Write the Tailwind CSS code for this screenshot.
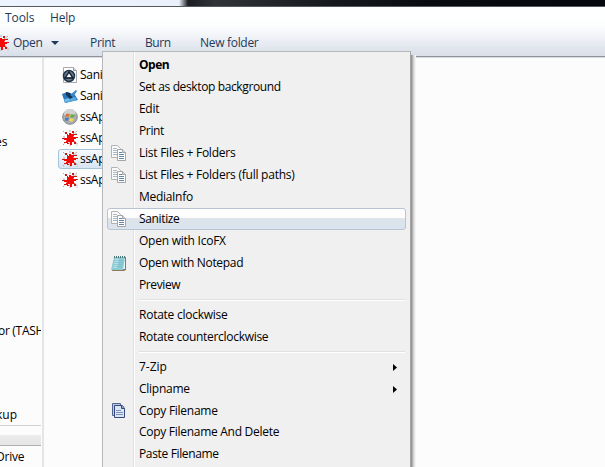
<!DOCTYPE html>
<html lang="en">
<head>
<meta charset="utf-8">
<title>Explorer</title>
<script src="https://cdn.jsdelivr.net/npm/@tailwindcss/browser@4"></script>
</head>
<body class="w-[605px] h-[467px] overflow-hidden bg-[#fcfcfc] font-['Open_Sans','Noto_Sans',sans-serif] text-[12px] leading-[22px] text-black whitespace-nowrap">
<svg class="hidden">
  <symbol id="splat" viewBox="0 0 16 16">
    <path fill="none" stroke="#aaa" stroke-dasharray="2 1" d="M1 1l3 3M8 2V0M11 4l4-3M14 3v2M1 7h3M1 15l4-4M8 12v4M12 11l3 2v3"/>
    <path fill="#f50808" d="M5 5h2V3h2v1h3v2l-1 1h3v2h-2v2l1 1h-3v3H8v-3H6v1H4v-2l1-1H2V8h3z"/>
    <path fill="#c81818" d="M3 2h2v2H3zM5 4h1v1H5zM10 1h2v2h-2zM12 4h3v1h-3zM0 8h2v1H0zM14 7h2v1h-2zM12 12h2v2h-2zM5 13h2v1H5zM2 12h2v1H2z"/>
  </symbol>
  <symbol id="pages" viewBox="0 0 16 16">
    <path fill="#fafafa" stroke="#b3b3b3" d="M.5.500h6l3 3v9h-9z"/>
    <path stroke="#a9bac9" d="M2 3.500h4M2 5.500h5M2 7.500h5M2 9.500h5"/>
    <path fill="#fff" stroke="#a5a5a5" d="M6.500 4.500h5l3 3v8h-8z"/>
    <path fill="#ddd" stroke="#a5a5a5" d="M11.500 4.500v3h3"/>
    <path stroke="#6688a8" d="M8 7.500h3M8 9.500h5M8 11.500h5M8 13.500h5"/>
  </symbol>
</svg>

<header class="h-[57px]">
  <div class="h-[7px] border-b border-[#555a60] bg-[linear-gradient(90deg,#eef4fd_0,#eaf1fb_179px,#1b1d20_188px,#303338_215px,#23262a_270px,#16191d_330px,#080b10_430px,#05080c_100%)]"></div>
  <div class="h-[50px] bg-[linear-gradient(#ffffff_0,#fcfefe_18px,#f8f9fc_24px,#e5e9f0_38px,#d9e0ea_48px)] border-b border-[#8e939c] text-[#1e395b]">
    <nav class="flex h-[22px] pl-[5px]">
      <span class="w-[45px] tracking-[-0.1px]">Tools</span><span class="tracking-[-0.2px]">Help</span>
    </nav>
    <div class="flex h-[27px] items-center pt-px">
      <svg class="w-4 h-4 -ml-[7px]"><use href="#splat"/></svg>
      <span class="ml-1 w-[38px] tracking-[-0.3px]">Open</span>
      <svg class="w-2 h-1" viewBox="0 0 8 4"><path fill="#1e395b" d="M0 0h8L4 4z"/></svg>
      <span class="ml-[31px] w-[55px] tracking-[-0.3px]">Print</span>
      <span class="w-[55px] tracking-[-0.4px]">Burn</span>
      <span class="tracking-[-0.3px]">New folder</span>
    </div>
  </div>
</header>

<div class="flex h-[410px] border-t border-[#d8dade]">
  <aside class="w-[44px] border-r-2 border-[#e3e6e9]">
    <div class="w-[41px] overflow-hidden">
      <div class="mt-[73px] -ml-[5px]">es</div>
      <div class="mt-[167px] -ml-[2px] tracking-[-0.3px]">or (TASHA)</div>
      <div class="mt-[62px] -ml-[4px]">kup</div>
      <div class="h-[10px] border-t border-[#d2d2d2] -mt-px"></div>
      <div class="h-[11px] border-b border-[#b0b0b0] bg-linear-to-b from-[#ececec] to-[#e5e5e5]"></div>
      <div class="-ml-[4px] tracking-[-0.2px]">Drive</div>
    </div>
  </aside>
  <main class="w-[58px] pl-[14px] pt-[6px] overflow-hidden leading-[20px] tracking-[-0.3px]">
    <div class="flex h-[21px] items-center pl-1">
      <svg class="w-4 h-4 shrink-0" viewBox="0 0 16 16"><path fill="#fff" stroke="#aaa" d="M1.500.500h10l3 3v12h-13z"/><path fill="#ddd" stroke="#999" d="M11.500.500v3h3"/><circle cx="7" cy="9" r="5.500" fill="#687c91" stroke="#23364a" stroke-width="1.500"/><path fill="#a8b9c9" stroke="#101a27" stroke-width="1.300" d="M7 5l-4 6h8z"/><path fill="#fff" d="M7 7l-2 3h4z"/></svg>
      <span class="ml-[2px]">Sanitize</span>
    </div>
    <div class="flex h-[21px] items-center pl-1">
      <svg class="w-4 h-4 shrink-0" viewBox="0 0 16 16"><path fill="#2a78bb" d="M0 6l5-2 8 3 3 5-13 3z"/><path fill="#59a9df" d="M2 11l11-2 2 3-12 3z"/><path fill="#123658" d="M4 4l4 1 3 4-3 2-4-4z"/><path fill="#3389cc" d="M8 7l6-5 1 1-4 6z"/><path fill="#9dcdea" d="M3 12l4-1v1l-4 1z"/></svg>
      <span class="ml-[2px]">Sanitize</span>
    </div>
    <div class="flex h-[21px] items-center pl-1">
      <svg class="w-4 h-4 shrink-0" viewBox="0 0 16 16"><circle cx="8" cy="8" r="7.300" fill="#a9adb0" stroke="#858b8f"/><path fill="#d0d3d5" d="M2 6a6 6 0 0112-1L8 8z"/><path fill="#d97835" d="M4 5q2-1 4 0L7 8q-2-1-4 0z"/><path fill="#68ab40" d="M9 5q2 1 4 0l-1 3q-2 1-4 0z"/><path fill="#497fc0" d="M3 9q2-1 4 0l-1 3q-2-1-3 0z"/><path fill="#f5d45c" d="M8 9q2 1 4 0l-1 3q-2 1-4 0z"/></svg>
      <span class="ml-[2px]">ssApp</span>
    </div>
    <div class="flex h-[21px] items-center pl-1"><svg class="w-4 h-4 shrink-0"><use href="#splat"/></svg><span class="ml-[2px]">ssApp</span></div>
    <div class="flex h-[20px] mt-px w-[80px] items-center pl-[3px] rounded-[3px] border border-[#a5c3db] bg-linear-to-b from-[#f7fafd] to-[#d8e4f2]"><svg class="w-4 h-4 shrink-0"><use href="#splat"/></svg><span class="ml-[2px]">ssApp</span></div>
    <div class="flex h-[21px] items-center pl-1"><svg class="w-4 h-4 shrink-0"><use href="#splat"/></svg><span class="ml-[2px]">ssApp</span></div>
  </main>
</div>

<!-- Context menu -->
<div class="absolute left-[102px] top-[51px] w-[309px] h-[416px] overflow-hidden border-l border-t border-r border-l-[#b6b8bb] border-t-[#b6b8bb] border-r-[#a6a6a6] bg-[linear-gradient(90deg,#f0f0f0_30px,#e0e0e0_30px,#e0e0e0_31px,#fff_31px,#fff_32px,#f0f0f0_32px)] pt-[2px]">
  <div class="flex h-[22px] pl-9 font-bold tracking-[-0.5px]"><span>Open</span></div>
  <div class="flex h-[22px] pl-9 tracking-[-0.37px]"><span>Set as desktop background</span></div>
  <div class="flex h-[22px] pl-9 tracking-[-0.3px]"><span>Edit</span></div>
  <div class="flex h-[22px] pl-9 tracking-[-0.35px]"><span>Print</span></div>
  <div class="flex h-[22px] pl-2 items-center tracking-[-0.25px]"><svg class="w-4 h-4 mr-3"><use href="#pages"/></svg><span>List Files + Folders</span></div>
  <div class="flex h-[22px] pl-2 items-center tracking-[-0.24px]"><svg class="w-4 h-4 mr-3"><use href="#pages"/></svg><span>List Files + Folders (full paths)</span></div>
  <div class="flex h-[22px] pl-9 tracking-[-0.3px]"><span>MediaInfo</span></div>
  <div class="flex h-[22px] ml-1 w-[299px] pl-[3px] items-center rounded-[3px] border border-[#b9c4d2] bg-[linear-gradient(#fff_0,#fdfdfd_9px,#dde4ea_9px,#dae3ee_100%)] tracking-[-0.35px]"><svg class="w-4 h-4 mr-3"><use href="#pages"/></svg><span>Sanitize</span></div>
  <div class="flex h-[22px] pl-9 tracking-[-0.24px]"><span>Open with IcoFX</span></div>
  <div class="flex h-[22px] pl-2 items-center tracking-[-0.32px]">
    <svg class="w-4 h-4 mr-3" viewBox="0 0 16 16"><path fill="#8d7a55" d="M4 2h11v13l-2 1H1z"/><path fill="#e8f5f5" d="M4 2h10v12H2z"/><path fill="#8bcbd6" d="M3 2h11l-2 13H0z"/><path fill="#b5e1e7" d="M4 4h4L6 13H2z"/><path stroke="#76bac7" stroke-width=".6" d="M3 5.500h9M3 7.500h9M2 9.500h9M2 11.500h9"/><path stroke="#4d7679" stroke-width="2" stroke-dasharray="1 1" d="M3 2h12"/></svg>
    <span>Open with Notepad</span></div>
  <div class="flex h-[22px] pl-9 tracking-[-0.4px]"><span>Preview</span></div>
  <div class="h-[2px] my-[3px] ml-9 mr-[5px] border-t border-b border-t-[#e0e0e0] border-b-white"></div>
  <div class="flex h-[22px] pl-9 tracking-[-0.25px]"><span>Rotate clockwise</span></div>
  <div class="flex h-[22px] pl-9 tracking-[-0.3px]"><span>Rotate counterclockwise</span></div>
  <div class="h-[2px] my-[3px] ml-9 mr-[5px] border-t border-b border-t-[#e0e0e0] border-b-white"></div>
  <div class="flex h-[22px] pl-9 pr-[13px] items-center justify-between"><span>7-Zip</span><svg class="w-1 h-[7px]" viewBox="0 0 4 7"><path d="M0 0l4 3.500L0 7z"/></svg></div>
  <div class="flex h-[22px] pl-9 pr-[13px] items-center justify-between tracking-[-0.25px]"><span>Clipname</span><svg class="w-1 h-[7px]" viewBox="0 0 4 7"><path d="M0 0l4 3.500L0 7z"/></svg></div>
  <div class="flex h-[21px] pl-2 items-center tracking-[-0.27px]">
    <svg class="w-4 h-4 mr-3" viewBox="0 0 16 16"><path fill="#bdc9e4" stroke="#53658f" d="M1.500.500h8v12h-8z"/><path fill="#dce5f6" stroke="#344b7c" d="M3.500 2.500h8l2 3v9h-10z"/><path fill="#8497c4" stroke="#344b7c" d="M10.500 2.500v3h3"/><path stroke="#7f91b9" d="M5 7.500h5M5 9.500h7M5 11.500h7"/></svg>
    <span>Copy Filename</span></div>
  <div class="flex h-[22px] pl-9 tracking-[-0.28px]"><span>Copy Filename And Delete</span></div>
  <div class="flex h-[22px] pl-9 tracking-[-0.35px]"><span>Paste Filename</span></div>
</div>
<div class="absolute left-[411px] top-[55px] w-[5px] h-[412px] bg-[linear-gradient(90deg,#898989_0,#9d9d9d_1px,#c9c9c9_2px,#eeeeee_4px,#fcfcfc_5px)]"></div>
</body>
</html>
